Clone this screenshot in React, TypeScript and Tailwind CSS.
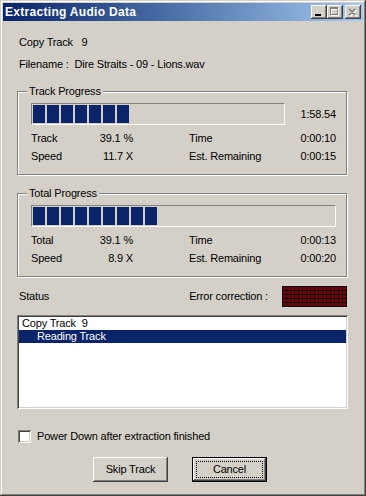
import React from 'react'

const FONT = { fontFamily: '"Liberation Sans", Arial, sans-serif' }

const RAISED =
  'shadow-[inset_-1px_-1px_#404040,inset_1px_1px_#ffffff,inset_-2px_-2px_#808080,inset_2px_2px_#d4d0c8]'
const SUNKEN =
  'shadow-[inset_1px_1px_#808080,inset_-1px_-1px_#ffffff,inset_2px_2px_#404040,inset_-2px_-2px_#d4d0c8]'

const Chunks = ({ count }: { count: number }) => (
  <div className="flex h-full gap-[2px]">
    {Array.from({ length: count }).map((_, i) => (
      <div key={i} className="h-[18px] w-[12px] bg-[#0a246a]" />
    ))}
  </div>
)

const ProgressBar = ({ chunks, width }: { chunks: number; width: string }) => (
  <div className={`h-[22px] border border-t-[#808080] border-l-[#808080] border-b-white border-r-white p-[1px] ${width}`}>
    <Chunks count={chunks} />
  </div>
)

interface Row {
  label: string
  value: string
  label2: string
  value2: string
}

const StatRow = ({ row }: { row: Row }) => (
  <div className="flex h-[13px] items-center leading-[13px]">
    <span className="w-[50px]">{row.label}</span>
    <span className="w-[52px] text-right whitespace-pre">{row.value}</span>
    <span className="ml-[56px] flex-1">{row.label2}</span>
    <span>{row.value2}</span>
  </div>
)

const GroupBox = ({ title, children }: { title: string; children: React.ReactNode }) => (
  <div className="relative w-[330px] border border-[#808080] shadow-[inset_1px_1px_#ffffff,1px_1px_#ffffff] pl-[13px] pr-[10px] pt-[11px] pb-[11px]">
    <span className="absolute -top-[7px] left-[9px] bg-[#d4d0c8] px-[2px] leading-[13px]">{title}</span>
    {children}
  </div>
)

const TitleButton = ({ children }: { children: React.ReactNode }) => (
  <div className={`relative h-[14px] w-[16px] bg-[#d4d0c8] ${RAISED}`}>{children}</div>
)

export default function App() {
  const trackRows: Row[] = [
    { label: 'Track', value: '39.1 %', label2: 'Time', value2: '0:00:10' },
    { label: 'Speed', value: '11.7 X', label2: 'Est. Remaining', value2: '0:00:15' },
  ]
  const totalRows: Row[] = [
    { label: 'Total', value: '39.1 %', label2: 'Time', value2: '0:00:13' },
    { label: 'Speed', value: '8.9 X', label2: 'Est. Remaining', value2: '0:00:20' },
  ]

  return (
    <div
      style={FONT}
      className="flex h-[496px] w-[366px] flex-col bg-[#d4d0c8] p-[3px] text-[11px] tracking-[-0.17px] text-black shadow-[inset_-1px_-1px_#404040,inset_1px_1px_#d4d0c8,inset_-2px_-2px_#808080,inset_2px_2px_#ffffff]"
    >
      {/* title bar */}
      <div className="flex h-[18px] items-center bg-linear-to-r from-[#0a246a] to-[#a6caf0] pl-[2px] pr-[2px]">
        <span className="flex-1 text-[12px] font-bold tracking-[0.3px] text-white">Extracting Audio Data</span>
        <div className="flex items-center">
          <TitleButton>
            <div className="absolute left-[4px] top-[9px] h-[2px] w-[6px] bg-black" />
          </TitleButton>
          <TitleButton>
            <div className="absolute left-[4px] top-[3px] h-[8px] w-[8px] border border-t-2 border-white" />
            <div className="absolute left-[3px] top-[2px] h-[8px] w-[8px] border border-t-2 border-[#808080]" />
          </TitleButton>
          <div className="ml-[2px]">
            <TitleButton>
              <svg className="absolute left-[3px] top-[2px]" width="10" height="10" viewBox="0 0 10 10">
                <path d="M2 3 L8 9 M8 3 L2 9 M2.5 3 L8.5 9 M8.5 3 L2.5 9" stroke="#ffffff" strokeWidth="1.2" />
                <path d="M1 2 L7 8 M7 2 L1 8 M1.5 2 L7.5 8 M7.5 2 L1.5 8" stroke="#808080" strokeWidth="1.2" />
              </svg>
            </TitleButton>
          </div>
        </div>
      </div>

      {/* body */}
      <div className="flex flex-col pl-[14px] leading-[13px]">
        <div className="mt-[15px] ml-[2px] h-[13px] whitespace-pre">Copy Track   9</div>
        <div className="mt-[9px] ml-[2px] h-[13px] whitespace-pre">Filename :  Dire Straits - 09 - Lions.wav</div>

        <div className="mt-[20px]">
          <GroupBox title="Track Progress">
            <div className="flex items-center justify-between">
              <ProgressBar chunks={7} width="w-[254px]" />
              <span>1:58.54</span>
            </div>
            <div className="mt-[7px] flex flex-col gap-[5px]">
              {trackRows.map((r) => (
                <StatRow key={r.label} row={r} />
              ))}
            </div>
          </GroupBox>
        </div>

        <div className="mt-[18px]">
          <GroupBox title="Total Progress">
            <ProgressBar chunks={9} width="w-full" />
            <div className="mt-[7px] flex flex-col gap-[5px]">
              {totalRows.map((r) => (
                <StatRow key={r.label} row={r} />
              ))}
            </div>
          </GroupBox>
        </div>

        {/* status */}
        <div className="mt-[9px] flex h-[21px] w-[330px] items-center">
          <span className="ml-[2px] flex-1">Status</span>
          <span className="mr-[14px]">Error correction :</span>
          <div className="grid grid-cols-[repeat(16,3px)] gap-[1px] bg-black p-[1px]">
            {Array.from({ length: 80 }).map((_, i) => (
              <div key={i} className="h-[3px] w-[3px] bg-[#800000]" />
            ))}
          </div>
        </div>

        <div className={`mt-[8px] h-[94px] w-[331px] bg-white p-[2px] ${SUNKEN}`}>
          <div className="h-[13px] pl-[3px] whitespace-pre">Copy Track  9</div>
          <div className="h-[13px] bg-[#0a246a] pl-[18px] text-white">Reading Track</div>
        </div>

        <div className="mt-[21px] ml-[1px] flex items-center">
          <div className={`h-[13px] w-[13px] bg-white ${SUNKEN}`} />
          <span className="ml-[6px]">Power Down after extraction finished</span>
        </div>

        <div className="mt-[14px] ml-[76px] flex gap-[24px]">
          <button className={`h-[25px] w-[75px] bg-[#d4d0c8] ${RAISED}`}>Skip Track</button>
          <button className="h-[25px] w-[75px] border border-black bg-[#d4d0c8]">
            <div
              className={`flex h-full w-full items-center justify-center outline-1 outline-dotted outline-black outline-offset-[-4px] ${RAISED}`}
            >
              Cancel
            </div>
          </button>
        </div>
      </div>
    </div>
  )
}
